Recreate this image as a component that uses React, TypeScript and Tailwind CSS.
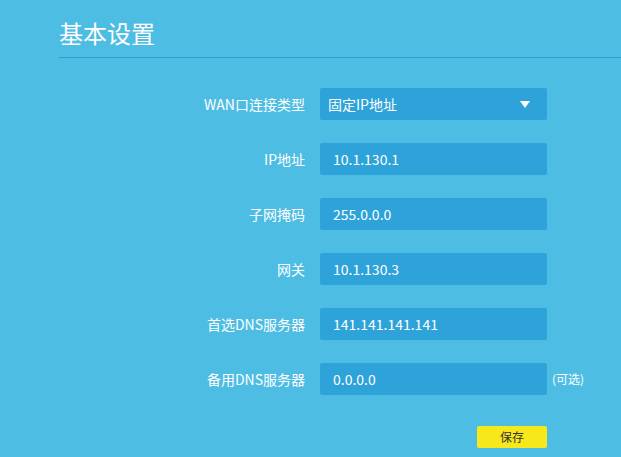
import React from 'react'

const rows = [
  { label: 'IP地址', value: '10.1.130.1' },
  { label: '子网掩码', value: '255.0.0.0' },
  { label: '网关', value: '10.1.130.3' },
  { label: '首选DNS服务器', value: '141.141.141.141' },
  { label: '备用DNS服务器', value: '0.0.0.0', hint: '(可选)' },
]

export default function App() {
  return (
    <div
      className="w-[621px] h-[457px] bg-[#4dbde3] overflow-hidden"
      style={{ fontFamily: '"Noto Sans CJK SC", "Noto Sans", sans-serif' }}
    >
      {/* Header */}
      <div className="ml-[59px] h-[58px] border-b border-[#3a9ccd] pt-[17px]">
        <h1 className="text-[24px] leading-[32px] text-white">基本设置</h1>
      </div>

      {/* Form */}
      <div className="mt-[30px] flex flex-col gap-[23px]">
        <div className="flex items-center h-[32px]">
          <label className="w-[305px] text-right text-[14px] text-white">WAN口连接类型</label>
          <div className="ml-[15px] w-[227px] h-[32px] bg-[#2ea3d9] rounded-[2px] flex items-center justify-between pl-[8px] pr-[17px] text-[14px] text-white">
            <span>固定IP地址</span>
            <svg width="10" height="7" viewBox="0 0 10 7">
              <path d="M0 0h10L5 7z" fill="#ffffff" />
            </svg>
          </div>
        </div>

        {rows.map((r) => (
          <div key={r.label} className="flex items-center h-[32px]">
            <label className="w-[305px] text-right text-[14px] text-white">{r.label}</label>
            <div className="ml-[15px] w-[227px] h-[32px] bg-[#2ea3d9] rounded-[2px] flex items-center pl-[13px] text-[14px] text-white">
              {r.value}
            </div>
            {r.hint && <span className="ml-[5px] text-[12px] text-white">{r.hint}</span>}
          </div>
        ))}
      </div>

      {/* Save */}
      <div className="mt-[28px] ml-[477px]">
        <button className="w-[70px] h-[22px] bg-[#f7e81c] rounded-[2px] text-[12px] leading-[22px] text-[#333333]">
          保存
        </button>
      </div>
    </div>
  )
}
